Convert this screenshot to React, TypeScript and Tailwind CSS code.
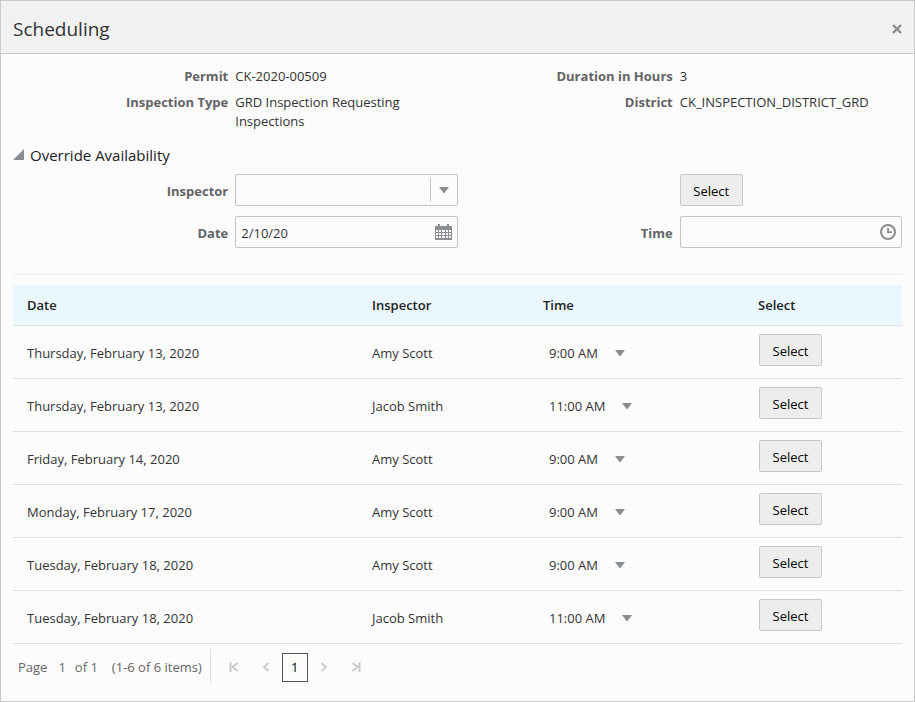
import { useState } from 'react'
import type { ReactNode } from 'react'

interface Slot {
  id: number
  date: string
  inspector: string
  time: string
}

const slots: Slot[] = [
  { id: 1, date: 'Thursday, February 13, 2020', inspector: 'Amy Scott', time: '9:00 AM' },
  { id: 2, date: 'Thursday, February 13, 2020', inspector: 'Jacob Smith', time: '11:00 AM' },
  { id: 3, date: 'Friday, February 14, 2020', inspector: 'Amy Scott', time: '9:00 AM' },
  { id: 4, date: 'Monday, February 17, 2020', inspector: 'Amy Scott', time: '9:00 AM' },
  { id: 5, date: 'Tuesday, February 18, 2020', inspector: 'Amy Scott', time: '9:00 AM' },
  { id: 6, date: 'Tuesday, February 18, 2020', inspector: 'Jacob Smith', time: '11:00 AM' },
]

function CaretDown() {
  return (
    <svg width="10" height="6" viewBox="0 0 10 6" className="pointer-events-none shrink-0 fill-[#8a8d90]">
      <path d="M0 0h10L5.5 6h-1z" />
    </svg>
  )
}

function CalendarIcon() {
  return (
    <svg width="17" height="16" viewBox="0 0 17 16" shapeRendering="crispEdges">
      <path fill="#8a8d91" d="M0 2h3V0h2v2h7V0h2v2h3v14H0z" />
      <path
        fill="#fcfcfc"
        d="M1 6h2v2H1zM4 6h2v2H4zM7 6h3v2H7zM11 6h2v2h-2zM14 6h2v2h-2zM1 9h2v2H1zM4 9h2v2H4zM7 9h3v2H7zM11 9h2v2h-2zM14 9h2v2h-2zM1 12h2v2H1zM4 12h2v2H4zM7 12h3v2H7zM11 12h2v2h-2zM14 12h2v2h-2z"
      />
    </svg>
  )
}

function ClockIcon() {
  return (
    <svg width="16" height="16" viewBox="0 0 16 16" fill="none" stroke="#8a8d91">
      <circle cx="8" cy="8" r="7" strokeWidth="2" />
      <path d="M8 4v4.2h4" strokeWidth="1.8" />
    </svg>
  )
}

function PagerButton({ label, d }: { label: string; d: string }) {
  return (
    <button type="button" aria-label={label} disabled className="flex size-6 items-center justify-center">
      <svg width="10" height="10" viewBox="0 0 10 10" fill="none" stroke="#c9cbcd" strokeWidth="2">
        <path d={d} />
      </svg>
    </button>
  )
}

function SelectButton({ onClick }: { onClick?: () => void }) {
  return (
    <button
      type="button"
      onClick={onClick}
      className="block h-8 w-[63px] rounded-[2px] border border-[#c8c8c8] bg-[#ededed] pt-[3px] text-[13px] text-black"
    >
      Select
    </button>
  )
}

function FieldLabel({ htmlFor, children }: { htmlFor: string; children: ReactNode }) {
  return (
    <label htmlFor={htmlFor} className="pr-[7px] text-right font-bold text-[#626466]">
      {children}
    </label>
  )
}

function App() {
  const [open, setOpen] = useState(true)
  const [date, setDate] = useState('2/10/20')
  const [time, setTime] = useState('')
  const [inspector, setInspector] = useState('')

  const fieldBox = 'flex h-8 items-center rounded-[2px] border border-[#c9c2bd] bg-[#fcfcfc]'

  return (
    <div className="flex min-h-screen flex-col border border-[#c8c8c8] bg-[#fcfcfc] font-['Open_Sans','Noto_Sans',sans-serif] text-[13px] leading-[19px] text-[#333333]">
      <header className="flex h-[53px] items-center justify-between border-b border-[#c8c8c8] bg-[#f1f1f1] px-3">
        <h1 className="pt-1 text-[19px] leading-6">Scheduling</h1>
        <button type="button" aria-label="Close" className="pt-1">
          <svg width="10" height="10" viewBox="0 0 10 10" stroke="#8a8d91" strokeWidth="2.4">
            <path d="M1 1l8 8M9 1L1 9" />
          </svg>
        </button>
      </header>

      <main className="px-3 pt-[13px]">
        <div className="grid grid-cols-4 gap-y-[7px]">
          <FieldLabel htmlFor="permit">Permit</FieldLabel>
          <output id="permit">CK-2020-00509</output>
          <FieldLabel htmlFor="duration">Duration in Hours</FieldLabel>
          <output id="duration">3</output>
          <FieldLabel htmlFor="type">Inspection Type</FieldLabel>
          <output id="type" className="pr-8">GRD Inspection Requesting Inspections</output>
          <FieldLabel htmlFor="district">District</FieldLabel>
          <output id="district">CK_INSPECTION_DISTRICT_GRD</output>
        </div>

        <button
          type="button"
          aria-expanded={open}
          onClick={() => setOpen(!open)}
          className="mt-[14px] flex items-center gap-[6px] text-[15px] leading-5 text-[#222222]"
        >
          <svg width="11" height="13" viewBox="0 0 11 13" className="fill-[#8a8d90]">
            <path d="M11 0v11H0z" />
          </svg>
          Override Availability
        </button>

        {open && (
          <div className="mt-[9px] grid grid-cols-4 items-center gap-y-[10px] [&>label]:pt-[2px]">
            <FieldLabel htmlFor="inspector">Inspector</FieldLabel>
            <div className={fieldBox}>
              <input
                id="inspector"
                role="combobox"
                aria-expanded={false}
                value={inspector}
                onChange={(e) => setInspector(e.target.value)}
                className="min-w-0 flex-1 px-[5px] pt-[2px] outline-none"
              />
              <button
                type="button"
                aria-label="Show inspectors"
                className="flex h-6 w-[27px] items-center justify-center border-l border-[#c9c2bd]"
              >
                <CaretDown />
              </button>
            </div>
            <div className="col-start-4">
              <SelectButton />
            </div>

            <FieldLabel htmlFor="date">Date</FieldLabel>
            <div className={fieldBox}>
              <input
                id="date"
                value={date}
                onChange={(e) => setDate(e.target.value)}
                className="min-w-0 flex-1 px-[5px] pt-[2px] outline-none"
              />
              <button type="button" aria-label="Pick a date" className="px-[5px]">
                <CalendarIcon />
              </button>
            </div>
            <FieldLabel htmlFor="time">Time</FieldLabel>
            <div className={fieldBox}>
              <input
                id="time"
                value={time}
                onChange={(e) => setTime(e.target.value)}
                className="min-w-0 flex-1 px-[5px] pt-[2px] outline-none"
              />
              <button type="button" aria-label="Pick a time" className="px-[5px]">
                <ClockIcon />
              </button>
            </div>
          </div>
        )}

        <hr className="mt-[26px] border-[#ebebeb]" />

        <table className="mt-[10px] w-full table-fixed text-left">
          <colgroup>
            <col className="w-[345px]" />
            <col className="w-[171px]" />
            <col className="w-[215px]" />
            <col />
          </colgroup>
          <thead>
            <tr className="h-10 border-b border-[#dfe3e6] bg-[#ebf7fe] text-[#222222]">
              <th className="px-[14px] pt-[2px] font-semibold">Date</th>
              <th className="px-[14px] pt-[2px] font-semibold">Inspector</th>
              <th className="px-[14px] pt-[2px] font-semibold">Time</th>
              <th className="px-[14px] pt-[2px] font-semibold">Select</th>
            </tr>
          </thead>
          <tbody>
            {slots.map((slot) => (
              <tr key={slot.id} className="h-[53px] border-b border-[#dfdfdf]">
                <td className="px-[14px] pt-[3px]">{slot.date}</td>
                <td className="px-[14px] pt-[3px]">{slot.inspector}</td>
                <td className="px-5 pt-[3px]">
                  <div className="flex items-center">
                    <select
                      aria-label={`Time for ${slot.inspector}, ${slot.date}`}
                      defaultValue={slot.time}
                      className="-mr-[10px] appearance-none pr-[26px] outline-none"
                    >
                      <option>{slot.time}</option>
                    </select>
                    <CaretDown />
                  </div>
                </td>
                <td className="px-[15px] pt-2 pb-3">
                  <SelectButton />
                </td>
              </tr>
            ))}
          </tbody>
        </table>

        <nav aria-label="Pagination" className="flex items-center pt-[5px] text-[#666666]">
          <div className="flex h-[34px] items-center border-r border-[#dfdfdf] pt-[3px] pr-2 pl-[5px]">
            <span>Page</span>
            <span className="pl-[11px]">1</span>
            <span className="pl-[9px]">of 1</span>
            <span className="pl-[14px]">(1-6 of 6 items)</span>
          </div>
          <div className="flex items-center gap-2 pt-[3px] pl-[11px]">
            <PagerButton label="First page" d="M1.5 0v10M8.5 1L3.5 5l5 4" />
            <PagerButton label="Previous page" d="M7.5 1L3 5l4.5 4" />
            <button
              type="button"
              aria-current="page"
              className="-mx-1 h-[29px] w-[26px] border border-[#555555] text-black"
            >
              1
            </button>
            <PagerButton label="Next page" d="M2.5 1L7 5 2.5 9" />
            <PagerButton label="Last page" d="M8.5 0v10M1.5 1l5 4-5 4" />
          </div>
        </nav>
      </main>
    </div>
  )
}

export default App
